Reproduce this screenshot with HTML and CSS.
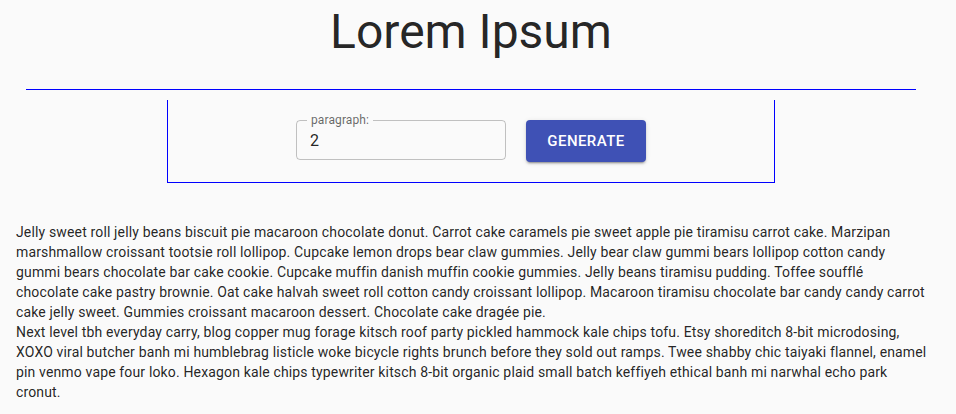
FILE: index.html
```html
<!DOCTYPE html>
<html lang="en">
<head>
<meta charset="utf-8">
<title>Lorem Ipsum</title>
<link rel="stylesheet" href="styles.css">
</head>
<body>
<div class="page">
  <h1 class="title">Lorem Ipsum</h1>
  <div class="rule"></div>
  <div class="panel">
    <div class="field">
      <label class="field-label" for="para">paragraph:</label>
      <input class="field-input" id="para" type="text" value="2">
    </div>
    <button class="btn" type="button">Generate</button>
  </div>
  <div class="text">
    <p class="para">Jelly sweet roll jelly beans biscuit pie macaroon chocolate donut. Carrot cake caramels pie sweet apple pie tiramisu carrot cake. Marzipan marshmallow croissant tootsie roll lollipop. Cupcake lemon drops bear claw gummies. Jelly bear claw gummi bears lollipop cotton candy gummi bears chocolate bar cake cookie. Cupcake muffin danish muffin cookie gummies. Jelly beans tiramisu pudding. Toffee soufflé chocolate cake pastry brownie. Oat cake halvah sweet roll cotton candy croissant lollipop. Macaroon tiramisu chocolate bar candy candy carrot cake jelly sweet. Gummies croissant macaroon dessert. Chocolate cake dragée pie.</p>
    <p class="para">Next level tbh everyday carry, blog copper mug forage kitsch roof party pickled hammock kale chips tofu. Etsy shoreditch 8-bit microdosing, XOXO viral butcher banh mi humblebrag listicle woke bicycle rights brunch before they sold out ramps. Twee shabby chic taiyaki flannel, enamel pin venmo vape four loko. Hexagon kale chips typewriter kitsch 8-bit organic plaid small batch keffiyeh ethical banh mi narwhal echo park cronut.</p>
  </div>
</div>
</body>
</html>
```

FILE: styles.css
```css
html, body {
  margin: 0;
  padding: 0;
  background: #fafafa;
}

body {
  font-family: Roboto, "Liberation Sans", sans-serif;
  color: rgba(0, 0, 0, 0.87);
}

.page {
  width: 942px;
}

.title {
  margin: 4px 0 0;
  font-size: 48px;
  line-height: 56px;
  font-weight: 400;
  text-align: center;
}

.rule {
  margin: 29px 26px 0;
  border-top: 1px solid #0000ff;
}

.panel {
  box-sizing: border-box;
  width: 608px;
  margin: 10px auto 0;
  padding: 20px 0;
  border: 1px solid #0000ff;
  border-top: none;
  display: flex;
  justify-content: center;
  align-items: flex-start;
  gap: 20px;
}

.field {
  position: relative;
  box-sizing: border-box;
  width: 210px;
  height: 40px;
  border: 1px solid rgba(0, 0, 0, 0.23);
  border-radius: 4px;
}

.field-label {
  position: absolute;
  top: -7px;
  left: 10px;
  padding: 0 4px;
  background: #fafafa;
  font-size: 12px;
  line-height: 12px;
  color: rgba(0, 0, 0, 0.6);
  letter-spacing: 0.00938em;
}

.field-input {
  box-sizing: border-box;
  width: 100%;
  height: 100%;
  border: none;
  outline: none;
  background: transparent;
  padding: 0 13px;
  font-family: Roboto, "Liberation Sans", sans-serif;
  font-size: 16px;
  color: rgba(0, 0, 0, 0.87);
  letter-spacing: 0.00938em;
}

.btn {
  box-sizing: border-box;
  width: 120px;
  height: 42px;
  padding: 0;
  border: none;
  border-radius: 4px;
  background: #3f51b5;
  color: #fff;
  font-family: Roboto, "Liberation Sans", sans-serif;
  font-size: 15px;
  font-weight: 500;
  letter-spacing: 0.02857em;
  text-transform: uppercase;
  box-shadow: 0 3px 1px -2px rgba(0, 0, 0, 0.2), 0 2px 2px 0 rgba(0, 0, 0, 0.14), 0 1px 5px 0 rgba(0, 0, 0, 0.12);
}

.text {
  margin-top: 39px;
  padding: 0 15px 0 16px;
}

.para {
  margin: 0;
  font-size: 14px;
  line-height: 20px;
  letter-spacing: 0.01071em;
}
```
